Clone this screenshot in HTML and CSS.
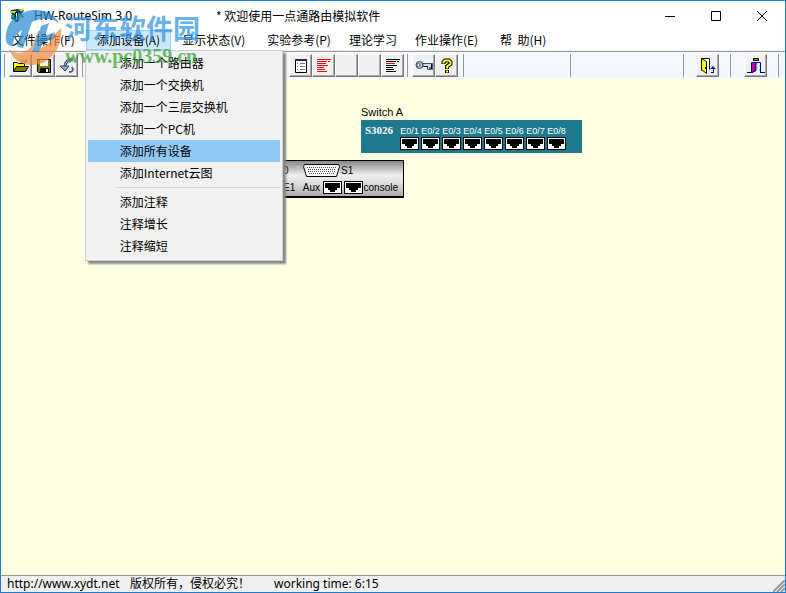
FILE: index.html
```html
<!DOCTYPE html>
<html lang="zh-CN">
<head>
<meta charset="utf-8">
<title>HW-RouteSim 3.0</title>
<link rel="stylesheet" href="styles.css">
</head>
<body>
<svg class="defs" aria-hidden="true">
  <symbol id="port" viewBox="0 0 19 13">
    <path fill="#000" d="M0 0h19v13H0z"/><path fill="#fff" d="M1 1h17v11H1z"/>
    <path fill="#000" d="M2 2h15v5h-3v2h-2v2H7V9H5V7H2z"/>
  </symbol>
</svg>
<div class="window">
  <header class="titlebar">
    <svg class="app-icon" width="16" height="16" viewBox="0 0 16 16" aria-hidden="true">
      <path fill="#064f4d" d="M2 2l6-1 7 1-2 4 2 3-4 1-2 4-4-2-3-1 2-3-2-3z"/>
      <path fill="#e5c51d" d="M1 3h6v2H1zM10 2l5-2-2 4zM9 9l5-2-3 5z"/>
      <path fill="#1298a0" d="M9 5h4v3H9zM2 7h3v3H2z"/>
      <path fill="#111" d="M6 4h3v10H6z"/><path fill="#eee" d="M7 5h1v7H7z"/>
    </svg>
    <h1 class="title">HW-RouteSim 3.0</h1>
    <span class="subtitle">* 欢迎使用一点通路由模拟软件</span>
    <div class="controls">
      <button class="control" aria-label="最小化"><svg width="10" height="10"><path stroke="#000" d="M0 5.500h10"/></svg></button>
      <button class="control" aria-label="最大化"><svg width="10" height="10"><path fill="none" stroke="#000" d="M.5.5h9v9h-9z"/></svg></button>
      <button class="control" aria-label="关闭"><svg width="10" height="10"><path stroke="#000" d="M0 0l10 10M10 0L0 10"/></svg></button>
    </div>
  </header>
  <nav class="menubar" aria-label="主菜单">
    <button class="menu-button">文件操作(F)</button>
    <div class="menu-group">
      <button class="menu-button open" aria-expanded="true">添加设备(A)</button>
      <div class="dropdown" role="menu">
        <button class="item" role="menuitem">添加一个路由器</button>
        <button class="item" role="menuitem">添加一个交换机</button>
        <button class="item" role="menuitem">添加一个三层交换机</button>
        <button class="item" role="menuitem">添加一个PC机</button>
        <button class="item selected" role="menuitem">添加所有设备</button>
        <button class="item" role="menuitem">添加Internet云图</button>
        <hr class="divider">
        <button class="item" role="menuitem">添加注释</button>
        <button class="item" role="menuitem">注释增长</button>
        <button class="item" role="menuitem">注释缩短</button>
      </div>
    </div>
    <button class="menu-button">显示状态(V)</button>
    <button class="menu-button">实验参考(P)</button>
    <button class="menu-button plain">理论学习</button>
    <button class="menu-button">作业操作(E)</button>
    <button class="menu-button">帮&nbsp; 助(H)</button>
  </nav>
  <div class="toolbar" role="toolbar" aria-label="工具栏">
    <div class="tools files">
      <button class="tool" aria-label="打开"><svg width="18" height="16" viewBox="0 0 18 16"><path fill="#ff0" stroke="#000" d="M1.500 13.500v-9h4l1 1h6v3"/><path fill="#808000" stroke="#000" d="M1.500 13.500l3-5h12l-3 5z"/><path fill="none" stroke="#777" d="M9 3.500c1-2 4-2 5 0M14.500 1v3h-3"/></svg></button>
      <button class="tool" aria-label="保存"><svg width="16" height="16" viewBox="0 0 16 16"><path fill="#808000" stroke="#000" d="M1.500 1.500h13v13h-12l-1-1z"/><path fill="#eee" d="M4 2h8v6H4z"/><path fill="#000" d="M4 10h9v4H4z"/><path fill="#eee" d="M10 11h2v3h-2z"/></svg></button>
      <button class="tool" aria-label="撤销"><svg width="16" height="16" viewBox="0 0 16 16"><path fill="none" stroke="#344563" stroke-width="3" d="M14 2C9 1 6 4 6 9"/><path fill="none" stroke="#b9c7de" d="M14 2C9 1 6 4 6 9"/><path fill="#91a8ce" stroke="#344563" d="M1 8h9l-4 5z"/><path stroke="#526586" stroke-width="2" fill="none" d="M10 14c4 0 5-2 3-5"/></svg></button>
    </div>
    <div class="tools views">
      <button class="tool" aria-label="属性"><svg width="14" height="16" viewBox="0 0 14 16"><path fill="#fff" stroke="#000" d="M1.500 1.500h11v13h-11z"/><path stroke="#202080" stroke-width="2" d="M1 2h12"/><path stroke="#777" d="M3 5.500h1M6 5.500h5M3 8.500h1M6 8.500h5M3 11.500h1M6 11.500h5"/></svg></button>
      <button class="tool" aria-label="配置列表"><svg width="14" height="16" viewBox="0 0 14 16"><path stroke="#f00" d="M0 1.500h14M0 3.500h10M11 3.500h2M0 5.500h9M0 7.500h11M0 9.500h7M0 11.500h8M0 13.500h10"/></svg></button>
      <button class="tool" aria-label="工具一"></button>
      <button class="tool" aria-label="工具二"></button>
      <button class="tool" aria-label="命令列表"><svg width="14" height="16" viewBox="0 0 14 16"><path stroke="#000" d="M0 1.500h14M0 3.500h10M11 3.500h2M0 7.500h11M0 9.500h7M0 11.500h8M0 13.500h10"/><path stroke="#f00" d="M0 5.500h9"/></svg></button>
    </div>
    <div class="tools help">
      <button class="tool" aria-label="密码"><svg width="18" height="14" viewBox="0 0 18 14"><circle cx="4.500" cy="6" r="3.500" fill="#a9c4d1" stroke="#37535f"/><circle cx="3.500" cy="6" r="1.500" fill="#fff" stroke="#456"/><path fill="#c9dce4" stroke="#405260" d="M8 4.500h9.500v6h-2v-2h-1v2h-2v-3H8z"/><path stroke="#111" d="M16.500 5v5M9 7.500h4"/></svg></button>
      <button class="tool" aria-label="帮助"><svg width="12" height="16" viewBox="0 0 12 16"><path fill="none" stroke="#000" stroke-width="4" d="M2.500 6V4L4 2.500h4L9.500 4v2L6 8.500V11M6 12v3"/><path fill="none" stroke="#ff0" stroke-width="2" d="M2.500 5.500V4L4 2.500h4L9.500 4v2L6 8.500V10.500M6 12.500v2"/></svg></button>
    </div>
    <span class="rule"></span>
    <div class="tools logout">
      <button class="tool" aria-label="注销"><svg width="16" height="16" viewBox="0 0 16 16"><path fill="#fff" stroke="#000" d="M1.500 12.500v-12h8v11"/><path fill="#ff0" stroke="#000" d="M1.500.5l5 3v12l-5-4z"/><path fill="#00f" d="M10 11l3-3 3 3h-2v4h-3v-1h2v-3z"/><path fill="#000" d="M5 9h1v2H5z"/></svg></button>
    </div>
    <div class="tools quit">
      <button class="tool" aria-label="退出"><svg width="18" height="16" viewBox="0 0 18 16"><path fill="#00c000" stroke="#000" d="M6.500.5h5v2h-5z"/><path fill="#fff" stroke="#000080" d="M4.500 14V4.500h9V14"/><path fill="#c000a0" d="M5 5h4v8l-4 2z"/><path fill="#6ef" d="M10 5h1v2h-1zM12 7h1v2h-1zM10 9h1v2h-1zM12 11h1v2h-1z"/><path stroke="#000080" fill="none" d="M0 14.500h5l4-2V5M13 14.500h5"/></svg></button>
    </div>
  </div>
  <main class="canvas">
    <section class="node switch">
      <h2 class="node-name">Switch A</h2>
      <div class="switch-body">
        <b class="model">S3026</b>
        <div class="ports">
          <div class="port">E0/1<svg width="19" height="13"><use href="#port"/></svg></div>
          <div class="port">E0/2<svg width="19" height="13"><use href="#port"/></svg></div>
          <div class="port">E0/3<svg width="19" height="13"><use href="#port"/></svg></div>
          <div class="port">E0/4<svg width="19" height="13"><use href="#port"/></svg></div>
          <div class="port">E0/5<svg width="19" height="13"><use href="#port"/></svg></div>
          <div class="port">E0/6<svg width="19" height="13"><use href="#port"/></svg></div>
          <div class="port">E0/7<svg width="19" height="13"><use href="#port"/></svg></div>
          <div class="port">E0/8<svg width="19" height="13"><use href="#port"/></svg></div>
        </div>
      </div>
    </section>
    <section class="node router" aria-label="路由器">
      <div class="router-row">
        <span class="slot">0</span>
        <svg class="serial" width="37" height="13" viewBox="0 0 37 13"><path fill="#fff" stroke="#000" d="M1.500.5h34l1 2-3 10h-30l-3-10z"/><path stroke="#555" stroke-dasharray="1 1" d="M4 3.500h29M5 5.500h27M5 7.500h27M6 9.500h25"/></svg>
        <span>S1</span>
      </div>
      <div class="router-row">
        <span class="slot">E1</span>
        <span class="aux">Aux</span>
        <svg width="19" height="13"><use href="#port"/></svg>
        <svg class="second" width="19" height="13"><use href="#port"/></svg>
        <span class="console">console</span>
      </div>
    </section>
  </main>
  <footer class="statusbar">
    <span class="site">http://www.xydt.net</span>
    <span class="rights">版权所有，侵权必究！</span>
    <span>working time: 6:15</span>
    <svg class="grip" width="12" height="12" viewBox="0 0 12 12" aria-hidden="true"><path stroke="#999" stroke-width="2" d="M0 12L12 0M4 12l8-8M8 12l4-4"/></svg>
  </footer>
  <div class="watermark">
    <svg class="wm-logo" width="60" height="60" viewBox="0 0 60 60" aria-hidden="true">
      <path fill="#f08a3c" d="M4 42c8 7 19 4 24-5l5-13 8-2-5 19c6-2 10-7 14-14l6-6c2 19-10 37-30 37C15 58 7 51 4 42z"/>
      <path fill="#2689d2" d="M1 34C-1 15 14 3 31 3c11 0 19 5 23 13-9-6-19-5-27-1L18 41c-3 0-5-1-6-3l5-15C11 27 8 32 8 39c-4 0-6-2-7-5z"/>
      <path fill="#2689d2" d="M36 19l8-3-4 13 10-4-3 7-10 4-3 9h-7l6-17z"/>
    </svg>
    <div class="wm-text">
      <span class="wm-name">河东软件园</span>
      <span class="wm-site">www.pc0359.cn</span>
    </div>
  </div>
</div>
</body>
</html>
```
FILE: styles.css
```css
* { box-sizing: border-box; }
body { margin: 0; background: #fff; color: #000; font: 12px/20px "Noto Sans CJK SC", sans-serif; }
button { margin: 0; padding: 0; border: 0; background: none; color: inherit; font: inherit; white-space: nowrap; }
h1, h2 { margin: 0; font: inherit; }
svg { display: block; flex: none; }
.defs { position: absolute; width: 0; height: 0; }
.window { position: relative; display: flex; flex-direction: column; min-height: 100vh; border: 1px solid #1b7fd2; overflow: hidden; }

.titlebar { display: flex; align-items: center; height: 29px; padding-left: 8px; }
.title { margin-left: 9px; width: 182px; font-family: "Noto Sans", sans-serif; }
.controls { display: flex; margin-left: auto; }
.control { display: grid; place-items: center; width: 46px; height: 28px; }

.menubar { display: flex; height: 21px; background: #fff; border-bottom: 1px solid #eee; }
.menu-button { padding: 0 11px; height: 20px; line-height: 20px; }
.menu-button.plain { padding: 0 7px; }
.menu-button.open { background: #cce8ff; box-shadow: inset 0 0 0 1px #99d1ff; }
.menu-group { position: relative; }
.dropdown { position: absolute; z-index: 2; top: 20px; left: -1px; width: 198px; padding: 1px 2px 3px; background: #f1f1f1; border: 1px solid #ccc; box-shadow: 3px 3px 2px #888; }
.item { display: block; width: 100%; height: 22px; padding-left: 32px; text-align: left; line-height: 22px; }
.item.selected { background: #91c9f7; }
.divider { margin: 3px 0 3px 28px; border: 0; border-top: 1px solid #d7d7d7; }

.toolbar { display: flex; align-items: center; height: 28px; padding: 0 6px 0 3px; background: #f4f7fc; border-top: 1px solid #999; }
.tools { display: flex; align-items: center; }
.tool { display: grid; place-items: center; width: 23px; height: 23px; background: #f0f0f0; border: 1px solid; border-color: #fff #777 #777 #fff; box-shadow: inset -1px -1px #aaa; }
.files { padding: 0 4px; border-left: 1px solid #999; border-right: 1px solid #999; }
.views { margin-left: 206px; padding-right: 3px; border-right: 1px solid #999; }
.help { padding: 0 5px 0 4px; border-right: 1px solid #999; }
.rule { width: 1px; height: 23px; margin-left: 106px; background: #999; }
.logout { margin-left: auto; padding: 0 11px 0 12px; border-left: 1px solid #999; }
.quit { padding: 0 11px 0 13px; border-left: 1px solid #999; border-right: 1px solid #999; }

.canvas { position: relative; flex: 1; min-height: 160px; background: #ffffe1; font: 10px/12px "Liberation Sans Narrow", "Liberation Sans", sans-serif; }
.node { position: absolute; }
.switch { left: 360px; top: 25px; width: 221px; }
.node-name { font: 11px/16px "Liberation Sans", sans-serif; }
.switch-body { display: flex; justify-content: space-between; height: 33px; padding: 5px 15px 3px 4px; color: #fff; background: #1e788e; }
.model { font: bold 11px/10px "Liberation Serif", serif; }
.ports { display: flex; }
.port { display: flex; flex-direction: column; align-items: center; width: 21px; font-size: 9px; }
.router { left: 203px; top: 81px; width: 200px; padding: 1px 5px 0 78px; border: 1px solid #000; border-bottom-width: 2px; background: linear-gradient(#888, #eee 40%, #ddd 65%, #aaa); }
.router-row { display: flex; align-items: center; height: 17px; }
.slot { width: 20px; }
.aux { width: 20px; }
.serial { margin-right: 1px; }
.second { margin: 0 1px 0 2px; }

.statusbar { display: flex; align-items: center; height: 17px; padding-left: 6px; background: #f0f0f0; border-top: 1px solid #999; font-family: "Noto Sans", "Noto Sans CJK SC", sans-serif; line-height: 16px; }
.site { width: 123px; }
.rights { width: 144px; }
.grip { margin: 3px 0 0 auto; }

.watermark { position: absolute; z-index: 3; top: 6px; left: 4px; display: flex; opacity: .7; pointer-events: none; }
.wm-text { display: flex; flex-direction: column; padding-top: 4px; }
.wm-name { color: #2c92e5; font: bold 27px/34px "Noto Sans CJK SC", sans-serif; }
.wm-site { color: #2da32d; font: bold 20px/22px "Liberation Serif", serif; }
```
